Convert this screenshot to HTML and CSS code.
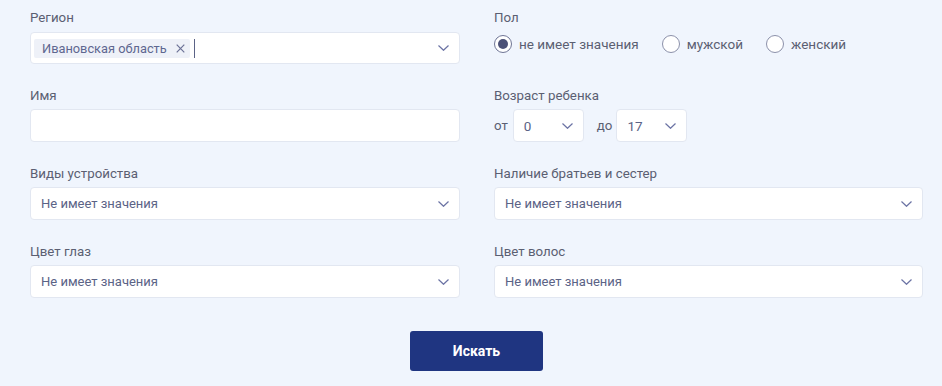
FILE: index.html
```html
<!DOCTYPE html>
<html lang="ru">
<head>
    <meta charset="UTF-8">
    <meta name="viewport" content="width=device-width, initial-scale=1.0">
    <title>Поиск</title>
    <link rel="stylesheet" href="styles.css">
</head>
<body>
    <form class="search-form">
        <div class="form-grid">
            <!-- Регион -->
            <div class="field">
                <label class="field-label">Регион</label>
                <div class="select-box multi">
                    <span class="chip">Ивановская область
                        <svg class="chip-close" width="9" height="9" viewBox="0 0 9 9"><path d="M0.7 0.7L8.3 8.3M8.3 0.7L0.7 8.3" stroke="#6b7196" stroke-width="1.2" fill="none"/></svg>
                    </span>
                    <span class="cursor"></span>
                    <svg class="chevron" width="11" height="6" viewBox="0 0 11 6"><path d="M0.5 0.5L5.5 5.3L10.5 0.5" stroke="#6b73a4" stroke-width="1.2" fill="none"/></svg>
                </div>
            </div>

            <!-- Пол -->
            <div class="field">
                <label class="field-label">Пол</label>
                <div class="radio-row">
                    <label class="radio checked"><span class="radio-dot"></span>не имеет значения</label>
                    <label class="radio"><span class="radio-dot"></span>мужской</label>
                    <label class="radio"><span class="radio-dot"></span>женский</label>
                </div>
            </div>

            <!-- Имя -->
            <div class="field">
                <label class="field-label">Имя</label>
                <div class="select-box"></div>
            </div>

            <!-- Возраст -->
            <div class="field">
                <label class="field-label">Возраст ребенка</label>
                <div class="age-row">
                    <span>от</span>
                    <div class="select-box small">0
                        <svg class="chevron" width="11" height="6" viewBox="0 0 11 6"><path d="M0.5 0.5L5.5 5.3L10.5 0.5" stroke="#6b73a4" stroke-width="1.2" fill="none"/></svg>
                    </div>
                    <span class="to">до</span>
                    <div class="select-box small">17
                        <svg class="chevron" width="11" height="6" viewBox="0 0 11 6"><path d="M0.5 0.5L5.5 5.3L10.5 0.5" stroke="#6b73a4" stroke-width="1.2" fill="none"/></svg>
                    </div>
                </div>
            </div>

            <!-- Виды устройства -->
            <div class="field">
                <label class="field-label">Виды устройства</label>
                <div class="select-box">Не имеет значения
                    <svg class="chevron" width="11" height="6" viewBox="0 0 11 6"><path d="M0.5 0.5L5.5 5.3L10.5 0.5" stroke="#6b73a4" stroke-width="1.2" fill="none"/></svg>
                </div>
            </div>

            <!-- Братья и сестры -->
            <div class="field">
                <label class="field-label">Наличие братьев и сестер</label>
                <div class="select-box">Не имеет значения
                    <svg class="chevron" width="11" height="6" viewBox="0 0 11 6"><path d="M0.5 0.5L5.5 5.3L10.5 0.5" stroke="#6b73a4" stroke-width="1.2" fill="none"/></svg>
                </div>
            </div>

            <!-- Цвет глаз -->
            <div class="field">
                <label class="field-label">Цвет глаз</label>
                <div class="select-box">Не имеет значения
                    <svg class="chevron" width="11" height="6" viewBox="0 0 11 6"><path d="M0.5 0.5L5.5 5.3L10.5 0.5" stroke="#6b73a4" stroke-width="1.2" fill="none"/></svg>
                </div>
            </div>

            <!-- Цвет волос -->
            <div class="field">
                <label class="field-label">Цвет волос</label>
                <div class="select-box">Не имеет значения
                    <svg class="chevron" width="11" height="6" viewBox="0 0 11 6"><path d="M0.5 0.5L5.5 5.3L10.5 0.5" stroke="#6b73a4" stroke-width="1.2" fill="none"/></svg>
                </div>
            </div>
        </div>

        <div class="actions">
            <button type="button" class="search-btn">Искать</button>
        </div>
    </form>
</body>
</html>
```

FILE: styles.css
```css
/* базовые стили */
body {
    margin: 0;
    background-color: #f0f5fd;
    font-family: Roboto, "Liberation Sans", sans-serif;
    font-size: 13.3px;
    color: #5b5f72;
}

.search-form {
    padding: 8px 19px 0 30px;
}

.form-grid {
    display: grid;
    grid-template-columns: 430px 429px;
    column-gap: 34px;
    row-gap: 21px;
}

.field-label {
    display: block;
    line-height: 20px;
    margin-bottom: 4px;
}

.field:nth-child(n+3) .field-label {
    margin-top: 1px;
    margin-bottom: 3px;
}

/* поля выбора */
.select-box {
    position: relative;
    box-sizing: border-box;
    height: 33px;
    display: flex;
    align-items: center;
    padding: 0 10px;
    background: #fff;
    border: 1px solid #e2e7f1;
    border-radius: 4px;
    color: #5b6386;
    font-size: 13px;
}

.select-box .chevron {
    margin-left: auto;
}

.select-box.multi {
    height: 32px;
    padding-left: 3px;
}

.chip {
    display: flex;
    align-items: center;
    height: 19px;
    padding: 0 5px 0 8px;
    background: #eef1f8;
    border-radius: 2px;
    color: #5e6790;
    font-size: 12.8px;
}

.chip-close {
    margin-left: 9px;
}

.cursor {
    width: 1px;
    height: 19px;
    margin-left: 4px;
    background: #5b6386;
}

/* радио-кнопки */
.radio-row {
    display: flex;
    align-items: center;
    height: 24px;
    gap: 23px;
    font-size: 13.5px;
}

.radio {
    display: flex;
    align-items: center;
    gap: 7px;
}

.radio-dot {
    box-sizing: border-box;
    width: 18px;
    height: 18px;
    border: 1.5px solid #8c91aa;
    border-radius: 50%;
    background: #fff;
    display: flex;
    align-items: center;
    justify-content: center;
}

.radio.checked .radio-dot {
    border-color: #6f7595;
}

.radio.checked .radio-dot::after {
    content: "";
    width: 10px;
    height: 10px;
    border-radius: 50%;
    background: #4b5177;
}

/* возраст */
.age-row {
    display: flex;
    align-items: center;
    gap: 5px;
}

.age-row .to {
    margin-left: 8px;
    margin-right: -1px;
}

.select-box.small {
    width: 71px;
    font-size: 13.5px;
}

/* кнопка поиска */
.actions {
    display: flex;
    justify-content: center;
    margin-top: 33px;
}

.search-btn {
    width: 133px;
    height: 40px;
    background: #1f3581;
    color: #fff;
    border: none;
    border-radius: 3px;
    font-family: inherit;
    font-size: 14px;
    font-weight: 700;
    cursor: pointer;
}
```
